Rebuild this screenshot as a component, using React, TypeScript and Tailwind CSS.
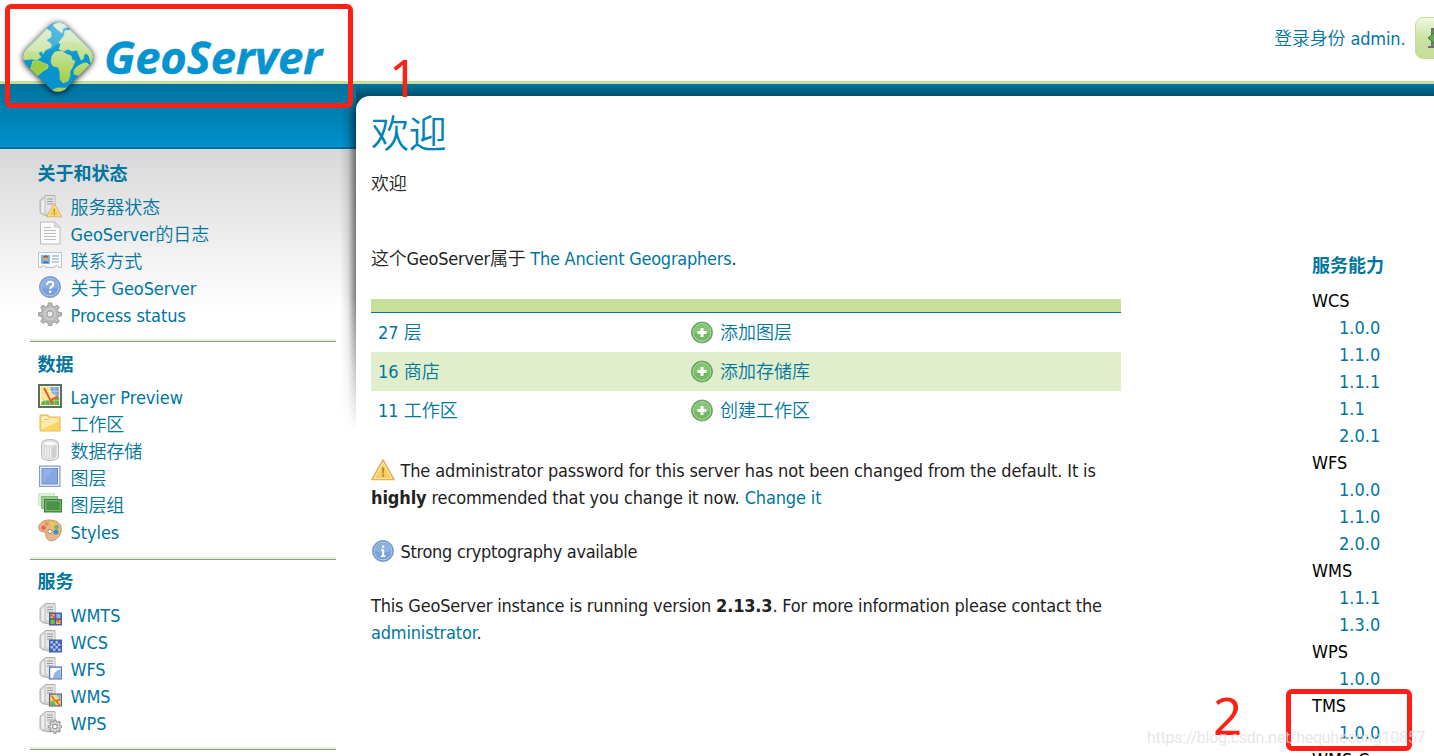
import type { ReactNode } from "react"

type Badge = "none" | "warn" | "tiles" | "checker" | "curve" | "map" | "gear"

const COG = "M10.3 1h3.4l.5 3 2.2 1 2.6-1.9 2.3 2.4L19.4 8l1 2.3 3 .4v3.2l-3 .5-1 2.2 1.9 2.6-2.4 2.3-2.6-1.8-2.1.9-.5 3h-3.4l-.5-3-2.2-.9-2.6 1.8-2.3-2.3 1.9-2.6-1-2.2-3-.5v-3.2l3-.4 1-2.3-1.9-2.5 2.3-2.4L7.6 5l2.2-1z"

const GEM = "M31 5.5Q38 1 45 5.5L70 30.5Q76 38 70 45.5L45 70.5Q38 75 31 70.5L6 45.5Q0 38 6 30.5z"

/* ---------- icons ---------- */

function Icon({ children }: { children: ReactNode }) {
    return (
        <svg viewBox="0 0 24 24" className="w-6 h-6 shrink-0">
            {children}
        </svg>
    )
}

function WarnShape() {
    return (
        <>
            <path d="M12 2 23 21.5H1z" fill="#fdf3cf" stroke="#e3b25a" strokeWidth="1.6" strokeLinejoin="round" />
            <path d="M12 5.5 20.3 20H3.7z" fill="#f6cf5b" />
            <path d="M11 9.5h2.2l-.4 6h-1.4z" fill="#b08a30" />
            <rect x="11" y="16.6" width="2.2" height="2" fill="#b08a30" />
        </>
    )
}

function ServerIcon({ badge }: { badge: Badge }) {
    return (
        <Icon>
            <path d="M2 6.5 7.5 1.5H17v17l-4 .5-2 3-7-1.500-2-2z" fill="#d2d2d2" stroke="#b0b0b0" />
            <path d="M8 2.5h8.500v16H8z" fill="#e6e6e6" />
            <path d="M3.500 7.500 6 5v14l-2.500-1z" fill="#f0f0f0" />
            <path d="M9 5h6M9 7.500h6M9 10h6" stroke="#979797" strokeWidth="1.2" />
            {badge === "warn" && (
                <g transform="translate(8 8.2) scale(.68)">
                    <WarnShape />
                </g>
            )}
            {badge === "tiles" && (
                <g>
                    <rect x="11" y="10.5" width="13" height="13" fill="#4c5d9e" />
                    <path d="M12.5 12h4.2v4.2h-4.2z" fill="#f0b35c" />
                    <path d="M18.3 12h4.2v4.2h-4.2z" fill="#8fb5e8" />
                    <path d="M12.5 17.8h4.2V22h-4.2z" fill="#79bd4b" />
                    <path d="M18.3 17.8h4.2V22h-4.2z" fill="#f1d554" />
                    <path d="m13 12.5 3.5 3.5m2 2 3 3m-2.5-2 3-1" stroke="#e15330" strokeWidth="1.3" />
                </g>
            )}
            {badge === "checker" && (
                <g>
                    <rect x="11" y="10.5" width="13" height="13" fill="#4463b5" />
                    <path
                        d="M12.5 12h2.5v2.5h-2.5zm5 0H20v2.5h-2.5zM15 14.5h2.5V17H15zm5 0h2.5V17H20zM12.5 17h2.5v2.5h-2.5zm5 0H20v2.5h-2.5zM15 19.5h2.5V22H15zm5 0h2.5V22H20z"
                        fill="#a8c0ee"
                    />
                </g>
            )}
            {badge === "curve" && (
                <g>
                    <rect x="11.6" y="11.1" width="11.8" height="11.8" fill="#fff" stroke="#5872bd" strokeWidth="1.3" />
                    <path d="M15 22c.3-4.5 3-8 7.5-8.5V22z" fill="#92b4ea" />
                </g>
            )}
            {badge === "map" && (
                <g>
                    <rect x="11.6" y="11.1" width="11.8" height="11.8" fill="#f2df73" stroke="#5b6290" strokeWidth="1.3" />
                    <path d="M18.5 12h4v5z" fill="#8fb5e8" />
                    <path d="M12.3 19.5c2-3 4-3 5.5 2.8h-5.5z" fill="#72b548" />
                    <path d="m13.5 12.5 2.5 4 2 1.5 3.5 4m-3.5-4 4-1.5" stroke="#e15330" strokeWidth="1.4" fill="none" />
                </g>
            )}
            {badge === "gear" && (
                <g transform="translate(10 9.5) scale(.58)">
                    <path d={COG} fill="#dedede" stroke="#9a9a9a" strokeWidth="2" />
                    <circle cx="12" cy="12" r="4" fill="#fff" stroke="#9a9a9a" strokeWidth="2" />
                </g>
            )}
        </Icon>
    )
}

function PageIcon() {
    return (
        <Icon>
            <path d="M2.5 1h14L22 6v17H2.5z" fill="#fbfbfb" stroke="#bcbcbc" />
            <path d="M16.5 1v5H22z" fill="#e2e2e2" stroke="#bcbcbc" strokeWidth=".8" />
            <path d="M6 6.5h7M6 9.5h12M6 12.5h12M6 15.5h12M6 18.5h12" stroke="#bdbdbd" strokeWidth="1.2" />
        </Icon>
    )
}

function CardIcon() {
    return (
        <Icon>
            <path d="M.5 4.5h23v15h-3V18h-4v1.5h-9V18h-4v1.5h-3z" fill="#fbfbfb" stroke="#c4c4c4" />
            <rect x="3" y="7" width="9" height="8.5" fill="#7ab2ee" />
            <path d="M4.5 15.5c.5-3 6-3 6.5 0z" fill="#3a74b4" />
            <circle cx="7.7" cy="10.5" r="2.2" fill="#e3a56d" />
            <path d="M5.3 10c0-3.2 4.8-3.2 4.8 0-1.5-1-3-1-4.8 0z" fill="#8a5a30" />
            <path d="M14 8h7M14 11h7M14 14h7" stroke="#a5bdd8" strokeWidth="1.3" />
        </Icon>
    )
}

function BlueDisc({ children }: { children: ReactNode }) {
    return (
        <>
            <circle cx="12" cy="12" r="10.6" fill="#6f98cf" stroke="#7e9ccb" strokeWidth=".8" />
            <circle cx="12" cy="12" r="8.9" fill="#76a0d6" stroke="#b4cbea" strokeWidth="1" />
            <path d="M4 12a8 8 0 0 1 16 0c-5 2-11 2-16 0z" fill="#9cbce4" opacity=".6" />
            {children}
        </>
    )
}

function HelpIcon() {
    return (
        <Icon>
            <BlueDisc>
                <path d="M9 10c0-4.5 6.3-4.2 6.3-.7 0 2.4-3.1 2.3-3.1 4.7" fill="none" stroke="#fff" strokeWidth="2" />
                <rect x="11.1" y="15.6" width="2.2" height="2.2" fill="#fff" />
            </BlueDisc>
        </Icon>
    )
}

function InfoIcon() {
    return (
        <Icon>
            <BlueDisc>
                <path d="M10 10.2h3.2v6h1.3V18H9.8v-1.8h1.3v-4.3H10zM11 6.5h2.2v2.2H11z" fill="#fff" />
            </BlueDisc>
        </Icon>
    )
}

function GearIcon() {
    return (
        <Icon>
            <path d={COG} fill="#bababa" stroke="#979797" strokeWidth="1" />
            <circle cx="12" cy="12" r="5.2" fill="none" stroke="#d2d2d2" strokeWidth="1.5" />
            <circle cx="12" cy="12" r="3.2" fill="#eee" stroke="#979797" />
        </Icon>
    )
}

function PreviewIcon() {
    return (
        <Icon>
            <rect x="1" y="1" width="22" height="22" fill="#f7f3d6" stroke="#5d6f60" strokeWidth="2" />
            <path d="M3 3h18v18H3z" fill="#f5e689" />
            <path d="M12 3h9v8.5c-4 1-8-1-9-8.5z" fill="#87a9e2" />
            <path d="M3 21c1-6 5-5 8-5s4-3 10-3v8z" fill="#6cb347" />
            <path d="M3 7.5h18M3 12h18M3 16.5h18M7.5 3v18M12 3v18M16.5 3v18" stroke="#fff" strokeWidth=".5" opacity=".6" />
            <path d="m6 4 8 15m-1-3 7-4" stroke="#e5573c" strokeWidth="2" fill="none" />
        </Icon>
    )
}

function FolderIcon() {
    return (
        <Icon>
            <path d="M2 4h8l1.5 2H22v14H2z" fill="#f6d773" stroke="#e2b860" />
            <path d="M3.5 5.5H9l1.5 2h10V10h-17z" fill="#fdf3cb" />
            <path d="M3.5 10.5h8l1.5-2h7.5v10h-17z" fill="#f7d85f" />
            <path d="m3.5 18.5 17-8v-2H13l-1.5 2h-8z" fill="#fcebaa" />
            <path d="M6 8.5h5" stroke="#e2b860" />
        </Icon>
    )
}

function DatabaseIcon() {
    return (
        <Icon>
            <path d="M3.5 5.5c0-5.300 17-5.300 17 0v13c0 5.300-17 5.300-17 0z" fill="#ececec" stroke="#b8b8b8" />
            <path d="M5.5 7v11c0 3.500 13 3.500 13 0V7c-2 2.500-11 2.500-13 0z" fill="#cfcfcf" />
            <path d="M7.5 8.8v10.400M10 9.300V20M12.500 9.300V20" stroke="#f2f2f2" strokeWidth="1.5" />
            <ellipse cx="12" cy="5.5" rx="6.8" ry="2.4" fill="#fbfbfb" stroke="#c5c5c5" strokeWidth=".7" />
        </Icon>
    )
}

function LayerIcon() {
    return (
        <Icon>
            <rect x="1.6" y="1.1" width="20.3" height="20.3" fill="#f2f5fb" stroke="#7f9bd6" strokeWidth="1.2" />
            <rect x="4" y="3.5" width="15.5" height="15.5" fill="#86a7e0" stroke="#6a8ccc" />
            <path d="M4.5 18.5v-15H16z" fill="#99b5e7" opacity=".6" />
        </Icon>
    )
}

function LayersIcon() {
    return (
        <Icon>
            <rect x=".5" y="1.5" width="16" height="12" fill="#d9efd6" stroke="#d0e8cd" />
            <rect x="3.5" y="4.5" width="16" height="12" fill="#9bcb93" stroke="#83bb7b" />
            <rect x="6.5" y="7.5" width="17" height="12.5" fill="#4a9447" stroke="#3c7f3f" />
            <rect x="7.8" y="8.8" width="14.4" height="9.9" fill="none" stroke="#8fc489" strokeWidth=".8" />
        </Icon>
    )
}

function PaletteIcon() {
    return (
        <Icon>
            <path d="M11 1C5 1 .5 4.5.7 9.3c.2 3 3.300 3.400 5.500 3.600 2.300.3 1 3.500 2.500 6.200 1.500 2.800 5.500 3.500 9 1.200C22 17.500 23.500 13 23.200 9 22.800 4 17.500 1 11 1z" fill="#e6b78d" stroke="#c48f66" />
            <circle cx="12" cy="12.5" r="2.2" fill="#fff" stroke="#b97f52" />
            <circle cx="5.5" cy="8.8" r="2.3" fill="#e8625a" />
            <circle cx="9" cy="4.7" r="2" fill="#f0923e" />
            <circle cx="14" cy="4.7" r="2.2" fill="#f1cb3a" />
            <circle cx="18.5" cy="8" r="2.3" fill="#7eb554" />
            <circle cx="18" cy="13" r="2.5" fill="#3a93b5" />
        </Icon>
    )
}

function AddIcon() {
    return (
        <Icon>
            <circle cx="12" cy="11.5" r="10.6" fill="#5ba251" stroke="#65a05f" strokeWidth=".7" />
            <circle cx="12" cy="11.5" r="8.9" fill="#72ba62" stroke="#bcdcb4" strokeWidth="1" />
            <path d="M4 11.5a8 8 0 0 1 16 0c-5 2-11 2-16 0z" fill="#98cf86" opacity=".5" />
            <path d="M10.5 7h3v3h3v3h-3v3h-3v-3h-3v-3h3z" fill="#fff" />
        </Icon>
    )
}

/* ---------- header ---------- */

function Logo() {
    return (
        <svg width="320" height="84" viewBox="0 0 320 84" className="mt-0.5 block overflow-visible">
            <defs>
                <linearGradient id="sea" x1="0" y1="0" x2="0" y2="1">
                    <stop offset="0" stopColor="#3fb0dc" />
                    <stop offset=".5" stopColor="#0a98d0" />
                    <stop offset="1" stopColor="#0a8fca" />
                </linearGradient>
                <linearGradient id="land" gradientUnits="userSpaceOnUse" x1="0" y1="3" x2="0" y2="60">
                    <stop offset="0" stopColor="#dcefe0" />
                    <stop offset=".5" stopColor="#c9e39b" />
                    <stop offset="1" stopColor="#a5d052" />
                </linearGradient>
                <clipPath id="gem">
                    <path d={GEM} />
                </clipPath>
            </defs>
            <path d={GEM} fill="url(#sea)" className="drop-shadow-[0_1px_3px_rgba(0,0,0,.9)]" />
            <g clipPath="url(#gem)" fill="url(#land)" stroke="url(#land)" strokeWidth=".8" strokeLinejoin="round">
                <path d="M0 33 25 9l6 4v5l-5 3 5 4v3l-6 3-2 4-1-3-4 2 3 4-4 3-5-1-10 1z" />
                <path d="m13 42 6 0 9 4v3l-5 3-7 6-6-6z" fill="#9bcd45" />
                <path d="m33 6 6-3 7 3 2 2-5 1-1 5-4-3z" />
                <path d="m40 22 4-5 1-5 6-1 24 22v10l-4 1-2-7-3-3-2 2-1 4-2 1-4-10-5 1-4-2-4 2-5-2 2-5-2-1z" />
                <path d="m32 37 3-4 7-1 4 3 5 2 1 4 3 1-3 7-2 3v5l-2 5-5 2-3-4v-7l-2-5-5-1-2-4z" />
                <path d="m54 51 4-4 6-3h3l3 3-10 10-6-2z" />
                <path d="m31 72 6-3h15l-7 6z" />
            </g>
            <path d="M7 31 32 7q6-4 12 0l25 24Q50 16 36 26q-9 10-29 5z" fill="#fff" opacity=".18" />
            <text
                x="84"
                y="55"
                textLength="218"
                lengthAdjust="spacingAndGlyphs"
                fill="#0594cf"
                stroke="#0594cf"
                strokeWidth=".4"
                className="font-['Open_Sans',sans-serif] text-[45px] font-bold italic"
            >
                GeoServer
            </text>
        </svg>
    )
}

function Header() {
    return (
        <header className="relative z-10 flex justify-between h-[81px] pl-5 pt-[17px]">
            <Logo />
            <div className="flex w-40 h-[42px] shrink-0 items-center overflow-hidden whitespace-nowrap">
                <span className="w-[141px] shrink-0">
                    <a href="#">登录身份 admin.</a>
                </span>
                <button className="flex w-24 h-[42px] shrink-0 items-center rounded-lg border border-[#c4dd9c] bg-linear-to-b from-[#f1f8e3] via-[#cbe2a3] to-[#c4de97] pl-3">
                    <svg viewBox="0 0 24 24" className="w-6 h-6">
                        <path d="M3 2h16v18H3zM0 20h22v2H0z" fill="#707070" />
                        <path d="M5 4h12v16H5z" fill="#8a8a8a" />
                        <path d="m0 12 8-7v4h9v6H8v4z" fill="#61a955" stroke="#3f8142" />
                    </svg>
                </button>
            </div>
        </header>
    )
}

/* ---------- sidebar ---------- */

const sections: { title: string; items: { icon: ReactNode; label: string }[] }[] = [
    {
        title: "关于和状态",
        items: [
            { icon: <ServerIcon badge="warn" />, label: "服务器状态" },
            { icon: <PageIcon />, label: "GeoServer的日志" },
            { icon: <CardIcon />, label: "联系方式" },
            { icon: <HelpIcon />, label: "关于 GeoServer" },
            { icon: <GearIcon />, label: "Process status" },
        ],
    },
    {
        title: "数据",
        items: [
            { icon: <PreviewIcon />, label: "Layer Preview" },
            { icon: <FolderIcon />, label: "工作区" },
            { icon: <DatabaseIcon />, label: "数据存储" },
            { icon: <LayerIcon />, label: "图层" },
            { icon: <LayersIcon />, label: "图层组" },
            { icon: <PaletteIcon />, label: "Styles" },
        ],
    },
    {
        title: "服务",
        items: [
            { icon: <ServerIcon badge="tiles" />, label: "WMTS" },
            { icon: <ServerIcon badge="checker" />, label: "WCS" },
            { icon: <ServerIcon badge="curve" />, label: "WFS" },
            { icon: <ServerIcon badge="map" />, label: "WMS" },
            { icon: <ServerIcon badge="gear" />, label: "WPS" },
        ],
    },
]

function Sidebar() {
    return (
        <aside className="relative w-[356px] shrink-0 tracking-[-0.07px]">
            <div className="h-[65px] border-b-2 border-[#00719b] bg-linear-to-b from-[#00739e] to-[#0092cc]" />
            <nav className="h-[640px] bg-linear-to-b from-[#d8d8d8] to-white to-[160px] pl-[30px] pr-5 pt-[11px]">
                {sections.map((s) => (
                    <section key={s.title} className="mb-[8.5px]">
                        <h3 className="pl-[7.5px] font-bold tracking-normal">{s.title}</h3>
                        <ul className="pl-2 pt-[6.5px] pb-[10.5px]">
                            {s.items.map((it) => (
                                <li key={it.label} className="flex h-[27px] gap-[8.5px]">
                                    {it.icon}
                                    <a href="#">{it.label}</a>
                                </li>
                            ))}
                        </ul>
                        <div className="h-[3px] border-b border-[#8f9c83] bg-[#e6f1d4]" />
                    </section>
                ))}
            </nav>
            {/* shadow thrown by the content panel */}
            <div className="absolute right-0 top-3 h-[336px] w-4 bg-linear-to-r from-transparent via-black/10 to-black/50 mask-b-from-60% mask-t-from-95%" />
        </aside>
    )
}

/* ---------- content ---------- */

const rows = [
    { count: "27 层", action: "添加图层" },
    { count: "16 商店", action: "添加存储库" },
    { count: "11 工作区", action: "创建工作区" },
]

const services = [
    { name: "WCS", versions: ["1.0.0", "1.1.0", "1.1.1", "1.1", "2.0.1"] },
    { name: "WFS", versions: ["1.0.0", "1.1.0", "2.0.0"] },
    { name: "WMS", versions: ["1.1.1", "1.3.0"] },
    { name: "WPS", versions: ["1.0.0"] },
    { name: "TMS", versions: ["1.0.0"] },
    { name: "WMS-C", versions: ["1.1.1"] },
]

function Summary() {
    return (
        <div className="w-[750px] tracking-[-0.18px]">
            <p className="tracking-[-0.24px]">
                这个GeoServer属于 <a href="#">The Ancient Geographers</a>.
            </p>
            <div className="mt-[27px] h-3.5 border-b border-[#00759f] bg-[#c7df9b]" />
            {rows.map((r) => (
                <div key={r.action} className="grid h-[39px] grid-cols-[312px_1fr] items-center pl-[7px] tracking-normal even:bg-[#e1eecc]">
                    <a href="#">{r.count}</a>
                    <a href="#" className="flex items-center gap-1.5">
                        <AddIcon />
                        {r.action}
                    </a>
                </div>
            ))}
            <p className="mt-[27px] tracking-[-0.14px]">
                <span className="mr-[5.5px] mt-px inline-block align-top">
                    <Icon>
                        <WarnShape />
                    </Icon>
                </span>
                The administrator password for this server has not been changed from the default. It is
                <br />
                <b>highly</b> recommended that you change it now. <a href="#">Change it</a>
            </p>
            <p className="mt-[27px] flex gap-[5.5px] tracking-[-0.3px]">
                <span className="mt-px">
                    <InfoIcon />
                </span>
                Strong cryptography available
            </p>
            <p className="mt-[27px]">
                This GeoServer instance is running version <b>2.13.3</b>. For more information please contact the
                <br />
                <a href="#">administrator</a>.
            </p>
        </div>
    )
}

function Capabilities() {
    return (
        <div className="w-[122px] shrink-0 pt-[7px] tracking-normal text-black">
            <h3 className="mb-2 font-bold">服务能力</h3>
            <ul>
                {services.map((s) => (
                    <li key={s.name}>
                        {s.name}
                        <ul className="pl-[27px]">
                            {s.versions.map((v) => (
                                <li key={v}>
                                    <a href="#">{v}</a>
                                </li>
                            ))}
                        </ul>
                    </li>
                ))}
            </ul>
        </div>
    )
}

function Content() {
    return (
        <main className="grow bg-linear-to-b from-[#0077a3] to-[#00506e] to-[12px] pt-3">
            <div className="h-[700px] rounded-tl-[14px] bg-white pl-[15px] pt-[15px]">
                <h1 className="text-[38px] leading-[46px] text-[#0083b8]">欢迎</h1>
                <p className="mt-[13px]">欢迎</p>
                <div className="mt-12 flex justify-between">
                    <Summary />
                    <Capabilities />
                </div>
            </div>
        </main>
    )
}

/* red marks laid over the page */
function Annotations() {
    return (
        <div className="font-normal">
            <div className="absolute z-20 left-[5px] top-1 h-[104px] w-[348px] rounded-md border-[5px] border-[#ff2015]" />
            <div className="absolute z-20 left-[389px] top-[49px] font-['Noto_Sans',sans-serif] text-[51px] leading-[56px] text-[#ff2015]">1</div>
            <div className="absolute z-20 left-[1286px] top-[689px] h-[62px] w-[126px] rounded-md border-[5px] border-[#ff2015]" />
            <div className="absolute z-20 left-[1213px] top-[687px] font-['Noto_Sans',sans-serif] text-[51px] leading-[56px] text-[#ff2015]">2</div>
            <div className="absolute z-30 left-[1147px] top-[726px] font-['Roboto',sans-serif] text-base leading-6 tracking-[-0.26px] text-[#dedede]/75">
                https://blog.csdn.net/hequhecong10857
            </div>
        </div>
    )
}

export default function App() {
    return (
        <div className="relative h-[756px] overflow-hidden bg-white font-['DejaVu_Sans_Condensed','Noto_Sans_CJK_SC',sans-serif] text-[18px] leading-[27px] font-[350] tracking-[-0.14px] text-[#222] [&_a]:text-[#0076a1] [&_h3]:text-[#0076a1]">
            <Header />
            <div className="flex border-t-[3px] border-[#c5df9a]">
                <Sidebar />
                <Content />
            </div>
            <Annotations />
        </div>
    )
}
